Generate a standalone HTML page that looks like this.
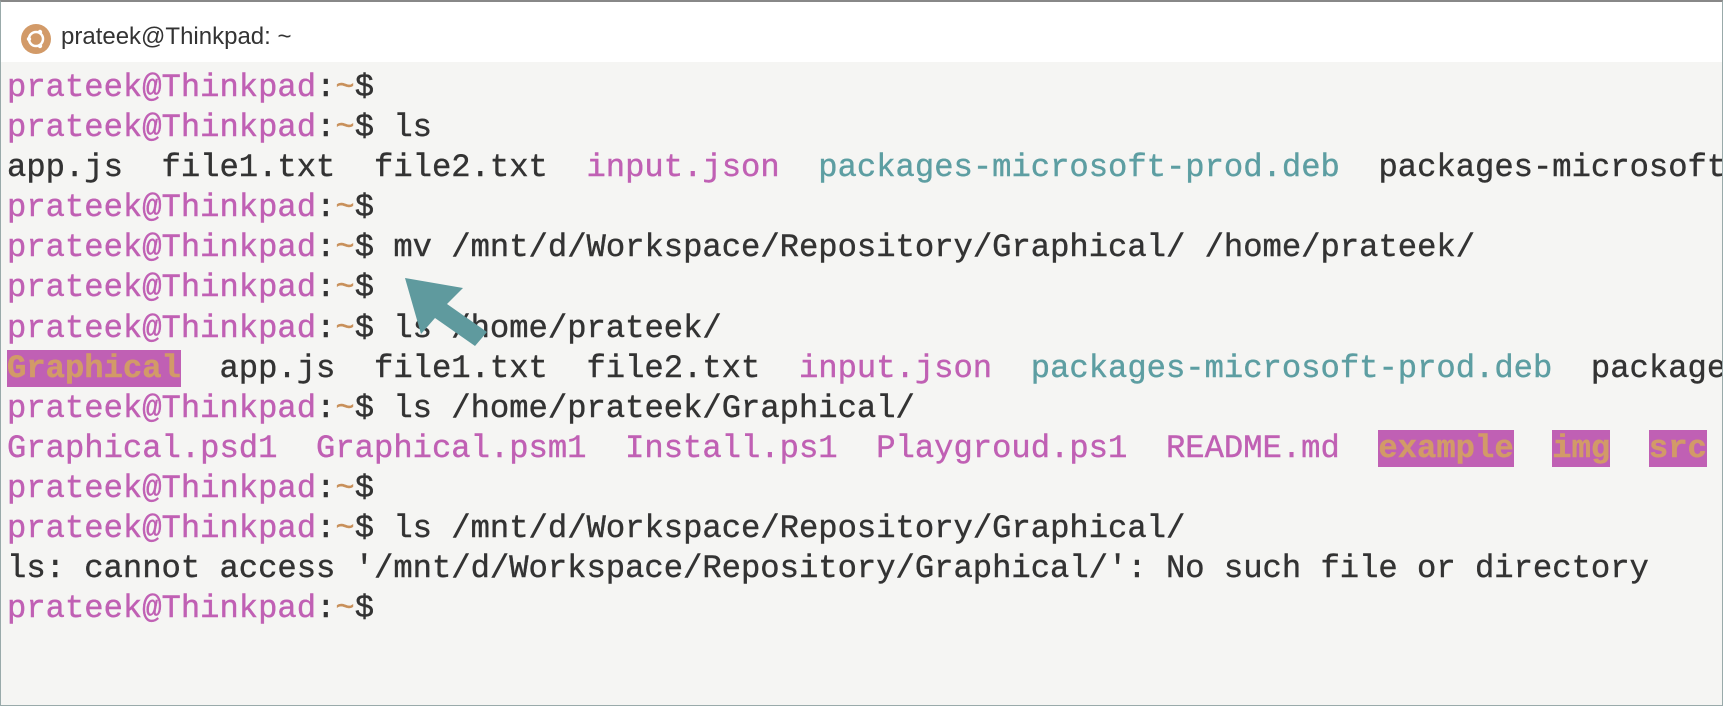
<!DOCTYPE html>
<html><head><meta charset="utf-8"><style>
html,body{margin:0;padding:0;width:1725px;height:708px;overflow:hidden;background:#fff;}
.win{position:absolute;left:0;top:0;width:1723px;height:706px;border:1px solid #9aa;border-top:2px solid #888;box-sizing:border-box;background:#f5f5f3;}
.title{position:absolute;left:0;top:0;right:0;height:60px;background:#fff;}
.icon{position:absolute;left:20px;top:22px;width:30px;height:30px;border-radius:50%;background:#d29a68;}
.ttext{position:absolute;left:60px;top:21px;font:24px "Liberation Sans",sans-serif;color:#333;}
pre{position:absolute;left:6px;top:66px;margin:0;font:32.2px/40.1px "Liberation Mono",monospace;color:#333;white-space:pre;width:1715px;overflow:hidden;-webkit-text-stroke:0.4px currentColor;}
.p{color:#c060b4}.t{color:#c8905a}.c{color:#5d9ea2}
.h{background:#c060b4;color:#d29a68;font-weight:bold}
</style></head><body>
<div class="win">
<div class="title"><div class="icon"><svg width="30" height="30" viewBox="0 0 30 30"><circle cx="15" cy="15" r="7" fill="none" stroke="#fff" stroke-width="2.5"/><circle cx="8" cy="15" r="2.2" fill="#fff"/><circle cx="19" cy="8" r="2.2" fill="#fff"/><circle cx="19" cy="22" r="2.2" fill="#fff"/></svg></div><div class="ttext">prateek@Thinkpad: ~</div></div>
<pre><span class="p">prateek@Thinkpad</span>:<span class="t">~</span>$
<span class="p">prateek@Thinkpad</span>:<span class="t">~</span>$ ls
app.js  file1.txt  file2.txt  <span class="p">input.json</span>  <span class="c">packages-microsoft-prod.deb</span>  packages-microsoft-prod.deb.1
<span class="p">prateek@Thinkpad</span>:<span class="t">~</span>$
<span class="p">prateek@Thinkpad</span>:<span class="t">~</span>$ mv /mnt/d/Workspace/Repository/Graphical/ /home/prateek/
<span class="p">prateek@Thinkpad</span>:<span class="t">~</span>$
<span class="p">prateek@Thinkpad</span>:<span class="t">~</span>$ ls /home/prateek/
<span class="h">Graphical</span>  app.js  file1.txt  file2.txt  <span class="p">input.json</span>  <span class="c">packages-microsoft-prod.deb</span>  packages-microsoft
<span class="p">prateek@Thinkpad</span>:<span class="t">~</span>$ ls /home/prateek/Graphical/
<span class="p">Graphical.psd1  Graphical.psm1  Install.ps1  Playgroud.ps1  README.md</span>  <span class="h">example</span>  <span class="h">img</span>  <span class="h">src</span>
<span class="p">prateek@Thinkpad</span>:<span class="t">~</span>$
<span class="p">prateek@Thinkpad</span>:<span class="t">~</span>$ ls /mnt/d/Workspace/Repository/Graphical/
ls: cannot access '/mnt/d/Workspace/Repository/Graphical/': No such file or directory
<span class="p">prateek@Thinkpad</span>:<span class="t">~</span>$</pre>
<svg style="position:absolute;left:0;top:0" width="1725" height="708"><polygon points="404,276 462,286 446,302 486,330 474,344 434,316 420,332" fill="#5f9a9e"/></svg>
</div>
</body></html>
